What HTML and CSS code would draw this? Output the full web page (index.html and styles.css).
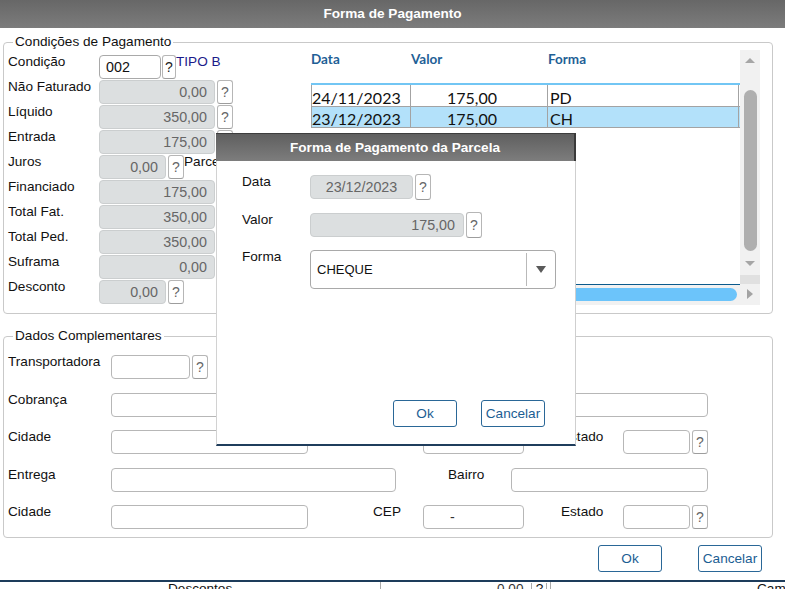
FILE: index.html
```html
<!DOCTYPE html>
<html lang="pt-BR">
<head>
<meta charset="utf-8">
<title>Forma de Pagamento</title>
<link rel="stylesheet" href="styles.css">
</head>
<body>
<div class="window">
  <div class="titlebar">Forma de Pagamento</div>
  <div class="content">
    <fieldset class="fs fs-cond">
      <legend>Condições de Pagamento</legend>
      <div class="cond-body">
        <div class="cond-left">
          <div class="row"><span class="lbl">Condição</span><span class="inp code">002</span><span class="q q-code">?</span><span class="tipo">TIPO B</span></div>
          <div class="row"><span class="lbl">Não Faturado</span><span class="inp ro">0,00</span><span class="q">?</span></div>
          <div class="row"><span class="lbl">Líquido</span><span class="inp ro">350,00</span><span class="q">?</span></div>
          <div class="row"><span class="lbl">Entrada</span><span class="inp ro">175,00</span><span class="q">?</span></div>
          <div class="row"><span class="lbl">Juros</span><span class="inp ro ro-short">0,00</span><span class="q">?</span><span class="parc">Parcelas</span></div>
          <div class="row"><span class="lbl">Financiado</span><span class="inp ro">175,00</span></div>
          <div class="row"><span class="lbl">Total Fat.</span><span class="inp ro">350,00</span></div>
          <div class="row"><span class="lbl">Total Ped.</span><span class="inp ro">350,00</span></div>
          <div class="row"><span class="lbl">Suframa</span><span class="inp ro">0,00</span></div>
          <div class="row"><span class="lbl">Desconto</span><span class="inp ro ro-short">0,00</span><span class="q">?</span></div>
        </div>
        <div class="grid">
          <div class="grid-main">
            <div class="cells">
              <div class="ghead"><span>Data</span><span>Valor</span><span>Forma</span></div>
              <div class="grow"><span class="c1">24/11/2023</span><span class="c2">175,00</span><span class="c3">PD</span></div>
              <div class="grow sel"><span class="c1">23/12/2023</span><span class="c2">175,00</span><span class="c3">CH</span></div>
            </div>
            <div class="vscroll">
              <span class="tri-up"></span>
              <span class="vthumb"></span>
              <span class="tri-down"></span>
              <span class="corner"></span>
            </div>
          </div>
          <div class="hscroll">
            <div class="htrack"><span class="hthumb"></span></div>
            <div class="hright"><span class="tri-right"></span></div>
          </div>
        </div>
      </div>
    </fieldset>

    <fieldset class="fs fs-dados">
      <legend>Dados Complementares</legend>
      <div class="drow"><span class="dlbl">Transportadora</span><span class="txt w79"></span><span class="q">?</span></div>
      <div class="drow"><span class="dlbl">Cobrança</span><span class="txt w597"></span></div>
      <div class="drow"><span class="dlbl">Cidade</span><span class="txt w197"></span><span class="mlbl m-cep">CEP</span><span class="txt w101 cep">-</span><span class="mlbl m-est">Estado</span><span class="txt w67"></span><span class="q">?</span></div>
      <div class="drow"><span class="dlbl">Entrega</span><span class="txt w285"></span><span class="mlbl m-bai">Bairro</span><span class="txt w197"></span></div>
      <div class="drow"><span class="dlbl">Cidade</span><span class="txt w197"></span><span class="mlbl m-cep">CEP</span><span class="txt w101 cep">-</span><span class="mlbl m-est">Estado</span><span class="txt w67"></span><span class="q">?</span></div>
    </fieldset>

    <div class="actions">
      <span class="btn">Ok</span>
      <span class="btn">Cancelar</span>
    </div>
  </div>

  <div class="under">
    <span class="u1">Descontos</span>
    <span class="u2"><span class="u-val">0,00</span><span class="u-q">?</span></span>
    <span class="u3">Cam</span>
  </div>

  <div class="dlg">
    <div class="dlg-title">Forma de Pagamento da Parcela</div>
    <div class="dlg-body">
      <div class="dr"><span class="dr-lbl">Data</span><span class="dinp d-data">23/12/2023</span><span class="q dq">?</span></div>
      <div class="dr dr-gap"><span class="dr-lbl">Valor</span><span class="dinp d-valor">175,00</span><span class="q dq">?</span></div>
      <div class="dr dr-gap"><span class="dr-lbl dr-lbl-top">Forma</span>
        <div class="select"><span class="sel-text">CHEQUE</span><span class="sel-arrow"><span class="tri-sel"></span></span></div>
      </div>
      <div class="dbtns">
        <span class="btn">Ok</span>
        <span class="btn">Cancelar</span>
      </div>
    </div>
  </div>
</div>
</body>
</html>
```

FILE: styles.css
```css
* { box-sizing: border-box; }
html, body { margin: 0; padding: 0; }
body {
  width: 785px;
  height: 589px;
  overflow: hidden;
  background: #fff;
  font-family: "Liberation Sans", Arial, sans-serif;
  font-size: 13.6px;
  color: #111;
}
.window { position: relative; width: 785px; height: 589px; overflow: hidden; }

.titlebar {
  height: 28px;
  line-height: 27px;
  text-align: center;
  color: #fff;
  font-weight: bold;
  background: linear-gradient(#676767, #7c7c7c);
}

.content { padding: 6px 12px 0 3px; }

.fs {
  margin: 0;
  padding: 0 0 0 4px;
  border: 1px solid #c9c9c9;
  border-radius: 4px;
  min-width: 0;
}
.fs legend {
  margin-left: 5px;
  padding: 0 2px;
  line-height: 16px;
  font-size: 13.6px;
}
.fs-cond { padding-bottom: 8px; }
.cond-body { display: flex; height: 255px; }
.cond-left { width: 303px; padding-top: 5px; flex: none; }

.row { display: flex; align-items: flex-start; height: 25px; }
.lbl { width: 91px; line-height: 14px; white-space: nowrap; flex: none; }

.inp {
  height: 24px;
  border-radius: 4px;
  font-size: 14.3px;
  line-height: 22px;
  white-space: nowrap;
  flex: none;
}
.code { width: 62px; border: 1px solid #a9a9a9; background: #fff; padding-left: 6px; color: #111; }
.ro {
  width: 116px;
  background: #dcdfe0;
  border: 1px solid #cbcecf;
  color: #666;
  text-align: right;
  padding-right: 7px;
}
.ro-short { width: 67px; }

.q {
  width: 16px;
  height: 24px;
  margin-left: 2px;
  border: 1px solid #b6b6b6;
  border-bottom-color: #9d9d9d;
  border-radius: 3px;
  background: #fff;
  color: #666;
  font-size: 14px;
  line-height: 23px;
  text-align: center;
  flex: none;
}
.q-code { width: 14px; margin-left: 1px; color: #222; }
.tipo { color: #1b1b8a; line-height: 14px; margin-left: 0; white-space: nowrap; }
.parc { line-height: 14px; white-space: nowrap; }

/* grid */
.grid { width: 449px; height: 255px; display: flex; flex-direction: column; flex: none; }
.grid-main { display: flex; height: 234px; }
.cells { width: 429px; flex: none; }
.ghead {
  display: grid;
  grid-template-columns: 100px 137px 191px;
  height: 35px;
  padding-top: 2px;
  border-bottom: 2px solid #72c6f4;
  font-family: Lato, "Liberation Sans", sans-serif;
  font-weight: bold;
  font-size: 13.5px;
  line-height: 14px;
  color: #1f5f96;
}
.grow {
  display: grid;
  grid-template-columns: 99px 137px 191px;
  border-left: 1px solid #a3a3a3;
  border-bottom: 1px solid #a3a3a3;
  height: 22px;
  font-family: Lato, "Liberation Sans", sans-serif;
  font-size: 16px;
  line-height: 17px;
  color: #111;
}
.grow > span { border-right: 1px solid #a3a3a3; padding-top: 4px; white-space: nowrap; }
.grow.sel { height: 21px; background: #b3e1fa; }
.grow.sel > span { padding-top: 3px; }
.c1 { padding-left: 0; }
.c2 { padding-left: 36px; }
.c3 { padding-left: 2px; }

.vscroll {
  width: 20px;
  height: 234px;
  background: #f1f1f1;
  display: flex;
  flex-direction: column;
  align-items: center;
  padding-top: 8px;
  flex: none;
}
.tri-up {
  width: 0; height: 0;
  border-left: 5px solid transparent;
  border-right: 5px solid transparent;
  border-bottom: 5px solid #a6a6a6;
}
.vthumb { width: 13px; height: 161px; margin-top: 27px; border-radius: 7px; background: #afafaf; }
.tri-down {
  width: 0; height: 0;
  margin-top: 10px;
  border-left: 5px solid transparent;
  border-right: 5px solid transparent;
  border-top: 5px solid #a6a6a6;
}
.corner { align-self: stretch; height: 9px; margin-top: 9px; background: #e0e0e0; }

.hscroll { display: flex; height: 21px; }
.htrack {
  width: 429px;
  border-top: 1px solid #0b5a8c;
  background: #f1f1f1;
  padding-top: 3px;
  flex: none;
}
.hthumb { display: block; margin-left: 20px; width: 406px; height: 13px; border-radius: 7px; background: #6cc4fa; }
.hright { width: 20px; background: #f1f1f1; display: flex; justify-content: center; padding-top: 5px; flex: none; }
.tri-right {
  width: 0; height: 0;
  border-top: 5px solid transparent;
  border-bottom: 5px solid transparent;
  border-left: 6px solid #a3a3a3;
}

/* dados complementares */
.fs-dados { margin-top: 14px; padding-top: 11px; padding-bottom: 7px; }
.drow { display: flex; align-items: flex-start; height: 25px; margin-bottom: 12.5px; }
.drow:last-child { margin-bottom: 0; }
.dlbl { width: 103px; line-height: 14px; white-space: nowrap; flex: none; }
.mlbl { line-height: 14px; white-space: nowrap; flex: none; }
.m-cep { margin-left: 65px; width: 50px; }
.m-est { margin-left: 37px; width: 62px; }
.m-bai { margin-left: 52px; width: 63px; }
.txt {
  height: 24px;
  border: 1px solid #b7b7b7;
  border-radius: 4px;
  background: #fff;
  font-size: 14.3px;
  line-height: 22px;
  color: #333;
  flex: none;
}
.w79 { width: 79px; }
.w597 { width: 597px; }
.w197 { width: 197px; }
.w101 { width: 101px; }
.w67 { width: 67px; }
.w285 { width: 285px; }
.cep { padding-left: 26px; }

.actions { display: flex; justify-content: flex-end; gap: 36px; margin-top: 7px; padding-right: 11px; }
.btn {
  width: 64px;
  height: 27px;
  border: 1px solid #2a6797;
  border-radius: 3px;
  background: #fff;
  color: #1b5e93;
  font-size: 13.6px;
  line-height: 25px;
  text-align: center;
  flex: none;
}

/* content behind, cut by the window edge */
.under {
  margin-top: 8px;
  border-top: 2px solid #1d3c5b;
  display: flex;
  height: 20px;
  line-height: 12px;
  font-size: 13.6px;
}
.u1 { width: 380px; padding-left: 168px; padding-top: 1px; flex: none; }
.u2 { width: 170px; border-left: 1px solid #aaa; display: flex; padding-top: 1px; flex: none; }
.u-val { margin-left: 116px; color: #333; }
.u-q { margin-left: 8px; border-left: 1px solid #aaa; border-right: 1px solid #aaa; width: 16px; text-align: center; }
.u3 { flex: 1; border-left: 1px solid #aaa; padding-left: 206px; padding-top: 1px; }

/* dialog */
.dlg {
  position: absolute;
  left: 216px;
  top: 133px;
  width: 360px;
  height: 313px;
  display: flex;
  flex-direction: column;
  background: #fff;
  z-index: 10;
}
.dlg-title {
  height: 28px;
  line-height: 27px;
  text-align: center;
  color: #fff;
  font-weight: bold;
  background: linear-gradient(#5f5f5f, #7d7d7d);
  border-top: 1px solid #3d3d3d;
  border-right: 2px solid #3a3a3a;
}
.dlg-body {
  flex: 1;
  border-left: 1px solid #d2d2d2;
  border-right: 1px solid #cfcfcf;
  border-bottom: 2px solid #1f3d5c;
  padding: 13px 0 17px 25px;
  display: flex;
  flex-direction: column;
}
.dr { display: flex; align-items: flex-start; }
.dr-gap { margin-top: 12px; }
.dr-lbl { width: 68px; line-height: 14px; padding-top: 1px; flex: none; }
.dr-lbl-top { padding-top: 0; }
.dinp {
  height: 24px;
  margin-top: 1px;
  background: #dcdfe0;
  border: 1px solid #cbcecf;
  border-radius: 4px;
  color: #666;
  font-size: 14.3px;
  line-height: 22px;
  flex: none;
}
.d-data { width: 103px; text-align: center; }
.d-valor { width: 154px; text-align: right; padding-right: 8px; }
.dq { height: 26px; line-height: 25px; }
.select {
  width: 246px;
  height: 39px;
  border: 1px solid #a9a9a9;
  border-radius: 4px;
  display: flex;
  align-items: center;
  flex: none;
}
.sel-text { flex: 1; padding-left: 6px; font-size: 13px; color: #111; }
.sel-arrow {
  width: 29px;
  height: 33px;
  border-left: 1px solid #b9b9b9;
  display: flex;
  align-items: center;
  justify-content: center;
  flex: none;
}
.tri-sel {
  width: 0; height: 0;
  border-left: 5px solid transparent;
  border-right: 5px solid transparent;
  border-top: 7px solid #5a5a5a;
}
.dbtns { margin-top: auto; display: flex; justify-content: flex-end; gap: 24px; padding-right: 30px; }
```
